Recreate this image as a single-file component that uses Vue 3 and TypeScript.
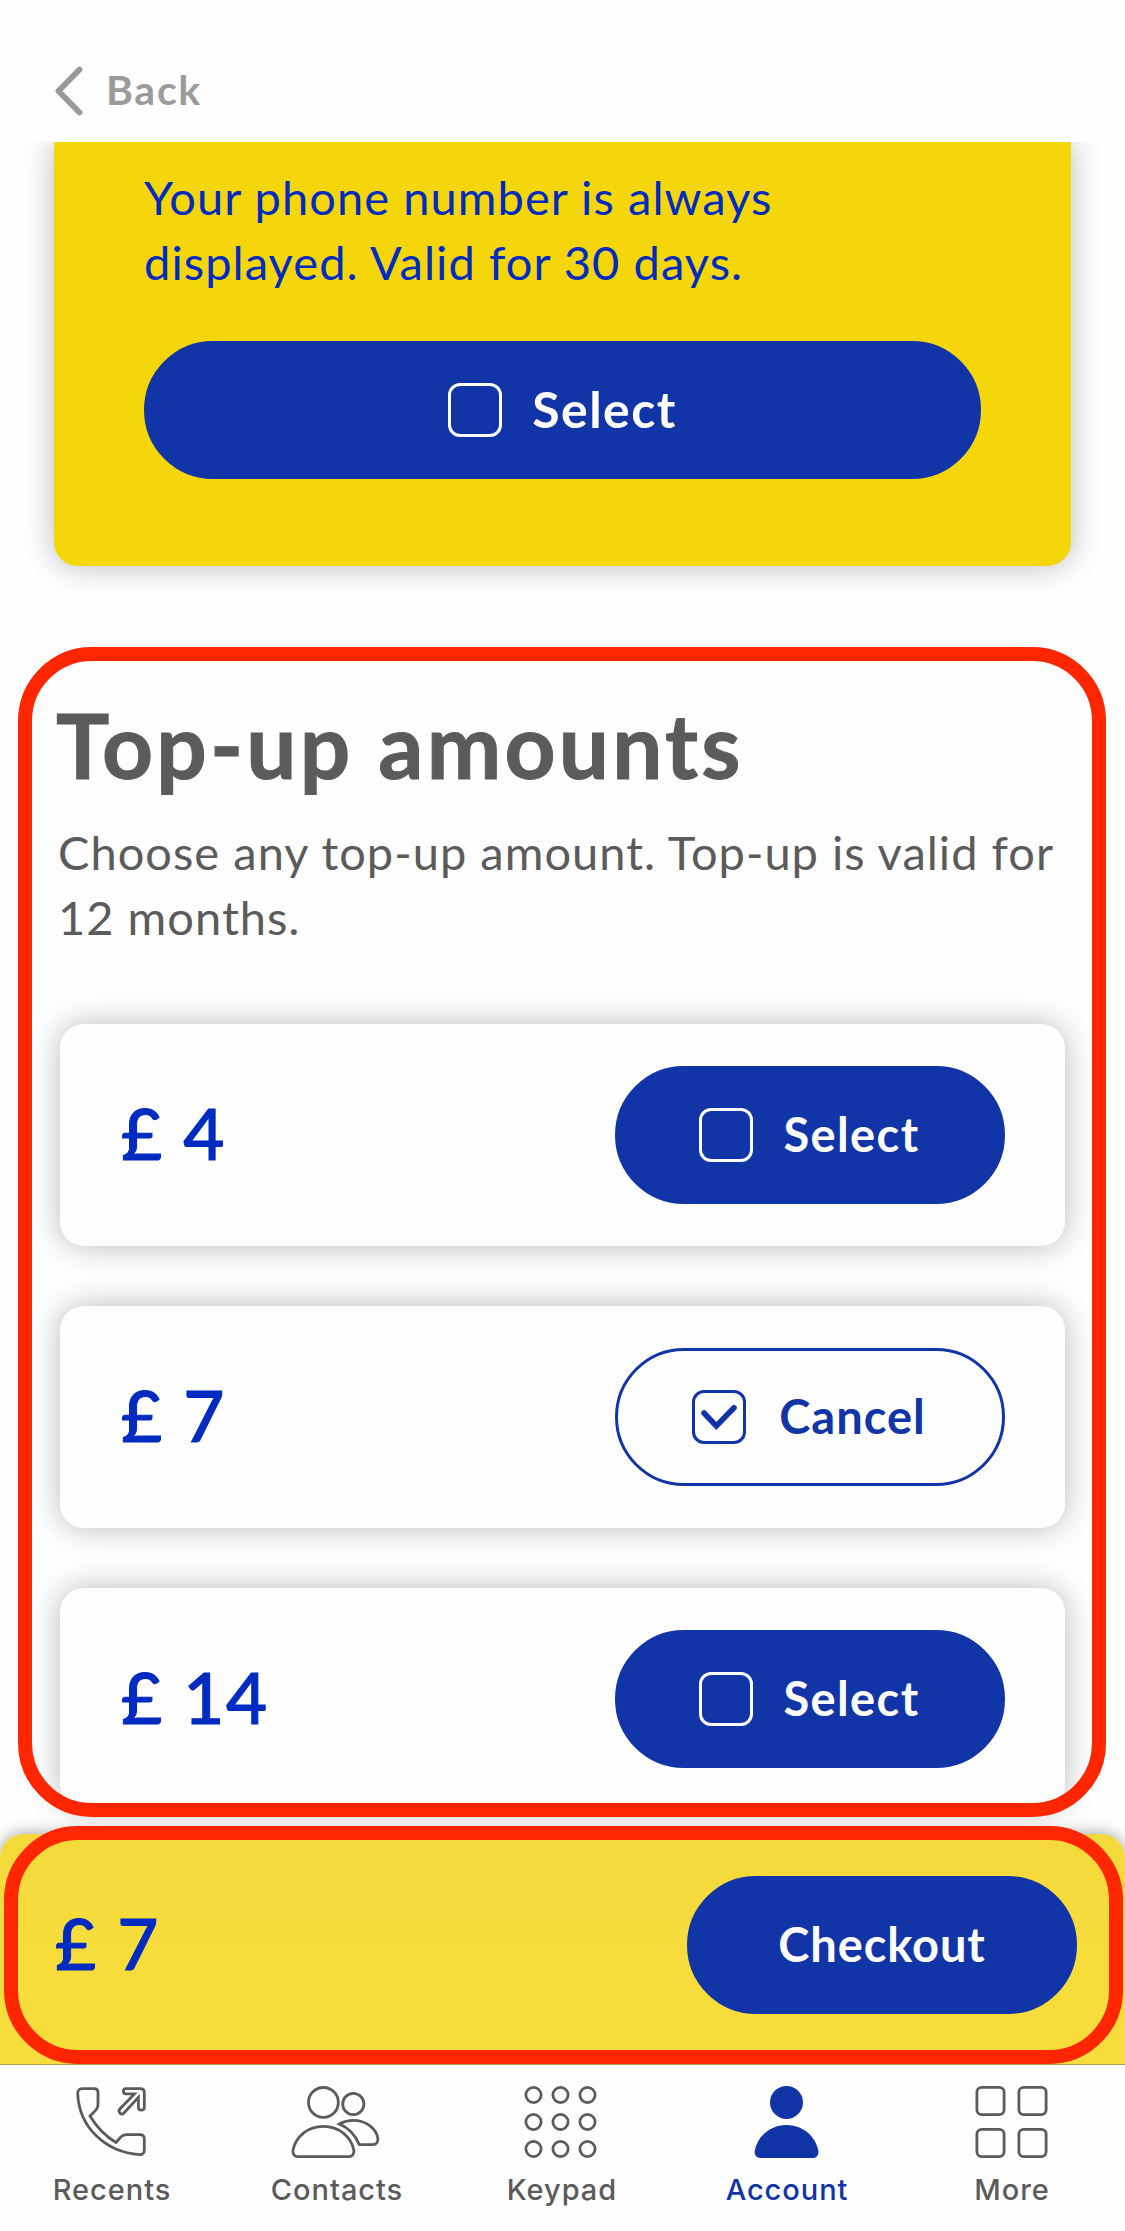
<script setup lang="ts">
import { ref, computed } from 'vue'

interface TopUp {
  id: number
  amount: number
}

interface Tab {
  id: string
  label: string
}

const topUps: TopUp[] = [
  { id: 1, amount: 4 },
  { id: 2, amount: 7 },
  { id: 3, amount: 14 },
]

const tabs: Tab[] = [
  { id: 'recents', label: 'Recents' },
  { id: 'contacts', label: 'Contacts' },
  { id: 'keypad', label: 'Keypad' },
  { id: 'account', label: 'Account' },
  { id: 'more', label: 'More' },
]

const keypadX = [19.5, 46.5, 73.5]
const keypadY = [15, 42, 69]

const activeTab = ref('account')
const selectedId = ref<number | null>(2)

const total = computed(() => topUps.find((t) => t.id === selectedId.value)?.amount ?? 0)

function toggle(id: number) {
  selectedId.value = selectedId.value === id ? null : id
}
</script>

<template>
  <div class="screen">
    <header class="nav">
      <svg class="chevron" width="30" height="52" viewBox="0 0 30 52">
        <path d="M25.5 4.5 L4.5 26 L25.5 47.5" />
      </svg>
      <span class="back">Back</span>
    </header>

    <main class="content">
      <section class="plan">
        <p class="plan-text">Your phone number is always<br />displayed. Valid for 30 days.</p>
        <button class="btn wide">
          <span class="box"></span>
          <span class="lbl">Select</span>
        </button>
      </section>

      <section class="topup">
        <h1>Top-up amounts</h1>
        <p class="intro">Choose any top-up amount. Top-up is valid for<br />12 months.</p>
        <div class="cards">
          <article v-for="t in topUps" :key="t.id" class="card">
            <span class="amount">£ {{ t.amount }}</span>
            <button v-if="t.id !== selectedId" class="btn" @click="toggle(t.id)">
              <span class="box"></span>
              <span class="lbl">Select</span>
            </button>
            <button v-else class="btn outline" @click="toggle(t.id)">
              <span class="box">
                <svg width="48" height="48" viewBox="0 0 48 48">
                  <path d="M9 20 L21.3 33 L39 14.7" />
                </svg>
              </span>
              <span class="lbl">Cancel</span>
            </button>
          </article>
        </div>
      </section>
    </main>

    <section class="checkout">
      <span class="amount">£ {{ total }}</span>
      <button class="btn"><span class="lbl pay">Checkout</span></button>
    </section>

    <nav class="tabs">
      <a v-for="tab in tabs" :key="tab.id" class="tab" :class="[tab.id, { active: tab.id === activeTab }]" @click="activeTab = tab.id">
        <svg width="96" height="84" viewBox="0 0 96 84">
          <g v-if="tab.id === 'recents'">
            <path d="M13.7 13.5 C13.6 10.5 15.5 8.6 18 8.6 H30 Q34 8.6 34 12.6 V24 C34 28 32 30.5 29.5 32.5 L26 36 C32 46 41 56 52 62.5 L55.5 58.5 C57.5 56 60 54.7 63 54.7 H76 Q80.3 54.7 80.3 58.9 V70 C80.3 73 78.3 75 75.5 74.7 C42 72 15 48 13.7 13.5Z" />
            <path d="M62 8.6 H76.3 Q80.3 8.6 80.3 12.6 V27.2 Q80.3 30.2 77.3 30.2 Q74.4 30.2 74.4 27.2 V17.3 L60 33 Q58 35 56 33.2 Q54 31.2 55.8 29 L70.5 13.9 H62 Q59.4 13.9 59.4 11.3 Q59.4 8.6 62 8.6Z" />
          </g>
          <g v-else-if="tab.id === 'contacts'">
            <circle cx="34.4" cy="22.4" r="14.9" />
            <circle cx="64.3" cy="24" r="10.6" />
            <path d="M3.9 70.5 C6.5 57 18.5 46.4 34.4 46.4 C50.3 46.4 62.3 57 64.9 70.5 C65.4 74 63 76.6 60 76.6 H8.8 C5.8 76.6 3.4 74 3.9 70.5Z" />
            <path d="M50.3 44 C55 41.5 59.5 40.4 64.3 40.4 C77 40.4 87.3 48.5 88.9 58.5 C89.3 62 87.2 64.6 84 64.6 H70.3 C66.5 55.5 60 48 50.3 44Z" />
          </g>
          <g v-else-if="tab.id === 'keypad'">
            <template v-for="y in keypadY" :key="y">
              <circle v-for="x in keypadX" :key="x" :cx="x" :cy="y" r="7.6" />
            </template>
          </g>
          <g v-else-if="tab.id === 'account'" class="solid">
            <circle cx="47.5" cy="22.4" r="16.5" />
            <path d="M15.8 70.5 C18.5 56.5 31 45 47.5 45 C64 45 76.5 56.5 79.3 70.5 C80 74.8 77.5 78 73.5 78 H21.5 C17.5 78 15 74.8 15.8 70.5Z" />
          </g>
          <g v-else>
            <rect x="12.9" y="7.4" width="27.2" height="27.2" rx="4.8" />
            <rect x="54.9" y="7.4" width="27.2" height="27.2" rx="4.8" />
            <rect x="12.9" y="49.4" width="27.2" height="27.2" rx="4.8" />
            <rect x="54.9" y="49.4" width="27.2" height="27.2" rx="4.8" />
          </g>
        </svg>
        <span class="tab-label">{{ tab.label }}</span>
      </a>
    </nav>

    <div class="mark mark-list"></div>
    <div class="mark mark-bar"></div>
  </div>
</template>

<style>
body {
  margin: 0;
}
</style>

<style scoped>
.screen {
  position: relative;
  display: flex;
  flex-direction: column;
  width: 1125px;
  height: 2231px;
  overflow: hidden;
  background: #fefefe;
  font-family: Lato, "Open Sans", sans-serif;
}

.nav {
  display: flex;
  flex: none;
  align-items: center;
  gap: 22px;
  box-sizing: border-box;
  height: 142px;
  padding: 39px 0 0 54px;
}

.chevron path {
  fill: none;
  stroke: #999;
  stroke-width: 5.8;
  stroke-linecap: round;
  stroke-linejoin: round;
}

.back {
  padding-bottom: 2px;
  color: #9b9b9b;
  font-size: 41px;
  font-weight: 700;
  line-height: 52px;
  letter-spacing: 1.7px;
}

.content {
  flex: none;
  box-sizing: border-box;
  height: 1724px;
  overflow: hidden;
}

.plan {
  box-sizing: border-box;
  height: 424px;
  margin: 0 54px;
  padding: 23px 90px 0;
  border-radius: 0 0 24px 24px;
  background: #f5d60b;
  box-shadow: 0 0 30px rgba(0, 0, 0, 0.27);
}

p {
  margin: 0;
  font-size: 47px;
  line-height: 65px;
}

.plan-text {
  height: 176px;
  color: #002bc0;
  letter-spacing: 1.07px;
}

.btn {
  display: flex;
  flex: none;
  align-items: center;
  justify-content: center;
  gap: 30px;
  box-sizing: border-box;
  width: 390px;
  height: 138px;
  padding: 0;
  border: 3px solid #1134a6;
  border-radius: 69px;
  background: #1134a6;
  color: #fefefe;
  font-family: inherit;
  font-size: 47px;
  font-weight: 700;
}

.btn.wide {
  width: 100%;
  font-size: 50px;
}

.btn.outline {
  background: #fefefe;
  color: #1134a6;
}

.box {
  box-sizing: border-box;
  width: 54px;
  height: 54px;
  border: 3px solid currentColor;
  border-radius: 12px;
}

.box svg {
  display: block;
}

.box path {
  fill: none;
  stroke: #1134a6;
  stroke-width: 5.6;
  stroke-linecap: round;
}

.lbl {
  padding-bottom: 2px;
  letter-spacing: 1.4px;
}

.card .lbl {
  padding-right: 1px;
}

.card .outline .lbl {
  padding: 0 2px 2px 3px;
  letter-spacing: 1px;
}

.lbl.pay {
  letter-spacing: 0.9px;
}

.topup {
  padding: 133px 60px 0;
}

h1 {
  position: relative;
  top: -4px;
  margin: 0 0 0 -4px;
  color: #5b5b5b;
  font-size: 89px;
  font-weight: 700;
  line-height: 100px;
  letter-spacing: 3.2px;
  -webkit-text-stroke: 1px #5b5b5b;
}

.intro {
  margin: 21px 0 0 -2px;
  color: #5b5b5b;
  letter-spacing: 1.02px;
  white-space: nowrap;
}

.cards {
  display: flex;
  flex-direction: column;
  gap: 60px;
  margin-top: 74px;
}

.card {
  display: flex;
  align-items: center;
  justify-content: space-between;
  box-sizing: border-box;
  width: 1005px;
  height: 222px;
  padding: 0 60px 0 61px;
  border-radius: 24px;
  background: #fefefe;
  box-shadow: 0 0 30px rgba(0, 0, 0, 0.27);
}

.amount {
  padding-bottom: 4px;
  color: #002bc0;
  font-size: 71px;
  font-weight: 500;
  line-height: 80px;
  letter-spacing: 1.6px;
  -webkit-text-stroke: 1px #002bc0;
}

.checkout {
  position: relative;
  display: flex;
  flex: none;
  align-items: flex-start;
  justify-content: space-between;
  box-sizing: border-box;
  height: 230px;
  margin-top: -32px;
  padding: 42px 48px 0 55px;
  border-radius: 24px 24px 0 0;
  background: linear-gradient(#f3d93a, #f6dd3c 50%);
  box-shadow: 0 0 15px rgba(0, 0, 0, 0.4);
}

.checkout .amount {
  margin-top: 27px;
}

.tabs {
  position: relative;
  display: flex;
  flex: none;
  height: 166px;
  border-top: 1px solid #b3a23a;
  background: #fefefe;
}

.tab {
  display: flex;
  flex-direction: column;
  align-items: center;
  box-sizing: border-box;
  width: 225px;
  padding-top: 15px;
  color: #5b5b5b;
}

.tab svg {
  margin-right: 1px;
  fill: none;
  stroke: currentColor;
  stroke-width: 2.8;
}

.tab .solid {
  fill: currentColor;
  stroke: none;
}

.tab.active {
  color: #1134a6;
}

.tab-label {
  margin-top: 8px;
  padding-right: 1px;
  font-family: Inter, sans-serif;
  font-size: 29px;
  font-weight: 500;
  line-height: 36px;
  letter-spacing: 0.95px;
}

.mark {
  position: absolute;
  box-sizing: border-box;
  border: 14px solid #ff2600;
  border-radius: 74px;
  pointer-events: none;
}

.mark-list {
  top: 647px;
  left: 18px;
  width: 1088px;
  height: 1170px;
}

.mark-bar {
  top: 1826px;
  left: 4px;
  width: 1119px;
  height: 238px;
}
</style>
